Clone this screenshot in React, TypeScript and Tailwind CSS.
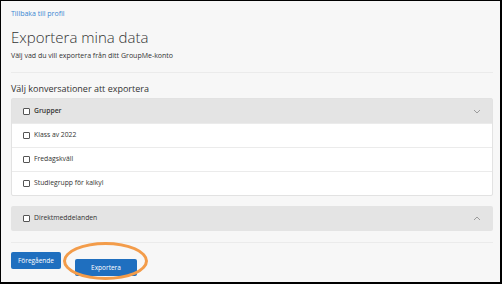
import React from 'react'

const font = { fontFamily: '"Open Sans", "Noto Sans", "Liberation Sans", sans-serif' }

function Box() {
  return <span className="inline-block w-[7px] h-[7px] border border-[#555] bg-white rounded-[1px] shrink-0" />
}

function Chevron({ up }: { up?: boolean }) {
  return (
    <svg width="8" height="5" viewBox="0 0 8 5" className="text-[#888]">
      <path d={up ? 'M1 4 L4 1 L7 4' : 'M1 1 L4 4 L7 1'} fill="none" stroke="currentColor" strokeWidth="0.8" />
    </svg>
  )
}

export default function App() {
  const rows = ['Klass av 2022', 'Fredagskväll', 'Studiegrupp för kalkyl']
  return (
    <div
      className="w-[502px] h-[284px] overflow-hidden border-t border-l border-r-2 border-b-2 border-black bg-[#f7f7f7] text-[#333]"
      style={font}
    >
      <div className="pl-[10px] pr-[7px] pt-[7px]">
        <a className="block text-[7px] text-[#3a86d2] leading-[12px]">Tillbaka till profil</a>

        <h1 className="mt-[7px] text-[15px] leading-[20px] font-light text-[#333]">Exportera mina data</h1>
        <p className="mt-[4px] text-[7px] leading-[10px] text-[#333]">Välj vad du vill exportera från ditt GroupMe-konto</p>

        <div className="mt-[11px] h-px bg-[#ebebeb]" />

        <h2 className="mt-[10px] text-[9px] leading-[12px] text-[#333]">Välj konversationer att exportera</h2>

        <div className="mt-[3px] bg-white border border-[#e2e2e2] rounded-[2px]">
          <div className="h-[24px] bg-[#e4e4e4] flex items-center pl-[11px] pr-[11px] gap-[4px]">
            <Box />
            <span className="text-[6.8px] font-semibold flex-1">Grupper</span>
            <Chevron />
          </div>
          {rows.map((r) => (
            <div key={r} className="h-[24px] flex items-center pl-[11px] gap-[4px] border-t border-[#ebebeb]">
              <Box />
              <span className="text-[6.8px]">{r}</span>
            </div>
          ))}
        </div>

        <div className="mt-[10px] h-[25px] bg-[#e4e4e4] rounded-[2px] flex items-center pl-[12px] pr-[12px] gap-[4px]">
          <Box />
          <span className="text-[6.8px] flex-1">Direktmeddelanden</span>
          <Chevron up />
        </div>

        <div className="mt-[11px] h-px bg-[#ebebeb]" />

        <div className="mt-[9px] flex gap-[14px]">
          <button className="w-[50px] h-[17px] bg-[#1f6fbf] rounded-[2px] text-white text-[6.5px]">Föregående</button>
          <div className="relative">
            <button className="w-[62px] h-[17px] bg-[#1f6fbf] rounded-[2px] text-white text-[6.5px]">Exportera</button>
            <div className="absolute left-[-12px] top-[-10px] w-[85px] h-[38px] rounded-[50%] border-[3px] border-[#f39c4a] pointer-events-none" />
          </div>
        </div>
      </div>
    </div>
  )
}
